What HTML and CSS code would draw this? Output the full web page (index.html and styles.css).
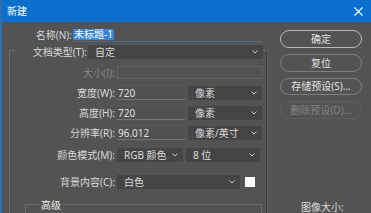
FILE: index.html
```html
<!DOCTYPE html>
<html lang="zh-CN">
<head>
<meta charset="utf-8">
<title>新建</title>
<link rel="stylesheet" href="styles.css">
</head>
<body>
<div class="window">
  <div class="titlebar">
    <span class="title">新建</span>
    <svg class="close" width="9" height="9" viewBox="0 0 9 9"><path d="M0.5 0.5 L8.5 8.5 M8.5 0.5 L0.5 8.5" stroke="#ffffff" stroke-width="1.1" fill="none"/></svg>
  </div>
  <div class="body">
    <div class="main">
      <div class="name-row">
        <span class="name-label">名称(N):</span>
        <div class="name-input"><span class="selected">未标题-1</span></div>
      </div>
      <div class="group">
        <div class="group-head">
          <span class="head-label">文档类型(T):</span>
          <div class="select s-type">自定<svg class="chev" width="6" height="4" viewBox="0 0 6 4"><path d="M0.5 0.5 L3 3 L5.5 0.5" stroke="#c8c8c8" fill="none"/></svg></div>
        </div>
        <div class="row r-size">
          <span class="label disabled">大小(I):</span>
          <div class="field-disabled"></div>
        </div>
        <div class="row r-dim">
          <span class="label">宽度(W):</span>
          <div class="input">720</div>
          <div class="select s-unit">像素<svg class="chev" width="6" height="4" viewBox="0 0 6 4"><path d="M0.5 0.5 L3 3 L5.5 0.5" stroke="#c8c8c8" fill="none"/></svg></div>
        </div>
        <div class="row r-dim2">
          <span class="label">高度(H):</span>
          <div class="input">720</div>
          <div class="select s-unit">像素<svg class="chev" width="6" height="4" viewBox="0 0 6 4"><path d="M0.5 0.5 L3 3 L5.5 0.5" stroke="#c8c8c8" fill="none"/></svg></div>
        </div>
        <div class="row r-dim2">
          <span class="label">分辨率(R):</span>
          <div class="input">96.012</div>
          <div class="select s-unit">像素/英寸<svg class="chev" width="6" height="4" viewBox="0 0 6 4"><path d="M0.5 0.5 L3 3 L5.5 0.5" stroke="#c8c8c8" fill="none"/></svg></div>
        </div>
        <div class="row r-mode">
          <span class="label">颜色模式(M):</span>
          <div class="select s-mode">RGB 颜色<svg class="chev" width="6" height="4" viewBox="0 0 6 4"><path d="M0.5 0.5 L3 3 L5.5 0.5" stroke="#c8c8c8" fill="none"/></svg></div>
          <div class="select s-unit">8 位<svg class="chev" width="6" height="4" viewBox="0 0 6 4"><path d="M0.5 0.5 L3 3 L5.5 0.5" stroke="#c8c8c8" fill="none"/></svg></div>
        </div>
        <div class="row r-bg">
          <span class="label">背景内容(C):</span>
          <div class="select s-bg">白色<svg class="chev" width="6" height="4" viewBox="0 0 6 4"><path d="M0.5 0.5 L3 3 L5.5 0.5" stroke="#c8c8c8" fill="none"/></svg></div>
          <div class="swatch"></div>
        </div>
        <div class="adv">
          <div class="adv-head">高级</div>
        </div>
      </div>
    </div>
    <div class="side">
      <div class="btn btn-default">确定</div>
      <div class="btn">复位</div>
      <div class="btn">存储预设(S)...</div>
      <div class="btn btn-disabled">删除预设(D)...</div>
      <div class="image-size">图像大小:</div>
    </div>
  </div>
</div>
</body>
</html>
```
FILE: styles.css
```css
html, body {
  margin: 0;
  padding: 0;
  background: #535353;
}
.window {
  width: 369px;
  height: 213px;
  border-left: 2px solid #2f6ea8;
  background: #535353;
  overflow: hidden;
  display: flex;
  flex-direction: column;
  font-family: "Noto Sans", "Noto Sans CJK SC", sans-serif;
  font-size: 10px;
  line-height: 12px;
  color: #d8d8d8;
}
.titlebar {
  height: 22px;
  flex: none;
  background: #0b6fce;
  margin-left: -2px;
  padding-left: 7px;
  padding-right: 8px;
  display: flex;
  align-items: center;
  justify-content: space-between;
}
.title {
  color: #ffffff;
  font-size: 10px;
  font-family: "Noto Sans CJK SC", sans-serif;
}
.body {
  flex: 1;
  display: flex;
  min-height: 0;
}
.main {
  width: 258px;
  padding-left: 7px;
  flex: none;
  display: flex;
  flex-direction: column;
}
.name-row {
  margin-top: 6px;
  display: flex;
  align-items: center;
  height: 14px;
}
.name-label {
  width: 63px;
  text-align: right;
  flex: none;
}
.name-input {
  width: 190px;
  height: 13px;
  border-bottom: 1px solid #56677d;
  display: flex;
  align-items: center;
  padding-left: 1px;
}
.selected {
  background: #3b83d6;
  color: #ffffff;
  padding: 0 1px;
  height: 11px;
  line-height: 11px;
}
.group {
  margin-top: 8px;
  width: 256px;
  height: 200px;
  flex: none;
  border: 1px solid #6a6a6a;
  border-right-color: #404040;
  box-shadow: 1px 0 0 #5e5e5e;
  display: flex;
  flex-direction: column;
}
.group-head {
  margin-top: -6px;
  margin-left: 7px;
  width: 246px;
  height: 14px;
  background: #535353;
  display: flex;
  align-items: center;
}
.head-label {
  width: 70px;
  padding-right: 1px;
  text-align: right;
  flex: none;
}
.select {
  height: 14px;
  background: #454545;
  display: flex;
  align-items: center;
  justify-content: space-between;
  padding: 0 5px 0 7px;
  box-sizing: border-box;
  flex: none;
  color: #dcdcdc;
}
.chev {
  flex: none;
}
.s-type { width: 175px; }
.s-unit { width: 74px; margin-left: 3px; }
.s-mode { width: 66px; }
.s-bg { width: 123px; }
.row {
  display: flex;
  align-items: center;
}
.label {
  width: 105px;
  text-align: right;
  flex: none;
  margin-right: 2px;
}
.disabled {
  color: #868686;
}
.r-size {
  margin-top: 7px;
  height: 13px;
}
.field-disabled {
  width: 146px;
  height: 13px;
  box-sizing: border-box;
  border: 1px solid #616161;
}
.r-dim {
  margin-top: 6px;
  height: 15px;
}
.r-dim2 {
  margin-top: 5px;
  height: 15px;
}
.input {
  width: 68px;
  height: 15px;
  box-sizing: border-box;
  border-top: 1px solid #5a5a5a;
  border-bottom: 1px solid #747474;
  background: #515151;
  padding-left: 1px;
  display: flex;
  align-items: center;
  color: #e0e0e0;
}
.r-mode {
  margin-top: 8px;
  height: 14px;
}
.r-bg {
  margin-top: 13px;
  height: 14px;
}
.swatch {
  width: 10px;
  height: 10px;
  background: #ffffff;
  margin-left: 5px;
  flex: none;
}
.adv {
  margin-top: 15px;
  margin-left: 15px;
  width: 235px;
  height: 30px;
  flex: none;
  border: 1px solid #6a6a6a;
}
.adv-head {
  margin-top: -6px;
  margin-left: 13px;
  padding: 0 2px;
  width: max-content;
  height: 12px;
  background: #535353;
  color: #ececec;
}
.side {
  margin-left: 13px;
  width: 82px;
  padding-top: 8px;
  display: flex;
  flex-direction: column;
  gap: 6px;
  flex: none;
}
.btn {
  height: 18px;
  box-sizing: border-box;
  border: 1px solid #7e7e7e;
  border-radius: 9px;
  display: flex;
  align-items: center;
  justify-content: center;
  color: #e2e2e2;
}
.btn-default {
  border-color: #b8b8b8;
}
.btn-disabled {
  border-color: #606060;
  color: #838383;
}
.image-size {
  margin-top: 76px;
  padding-left: 21px;
  color: #dcdcdc;
}
```
